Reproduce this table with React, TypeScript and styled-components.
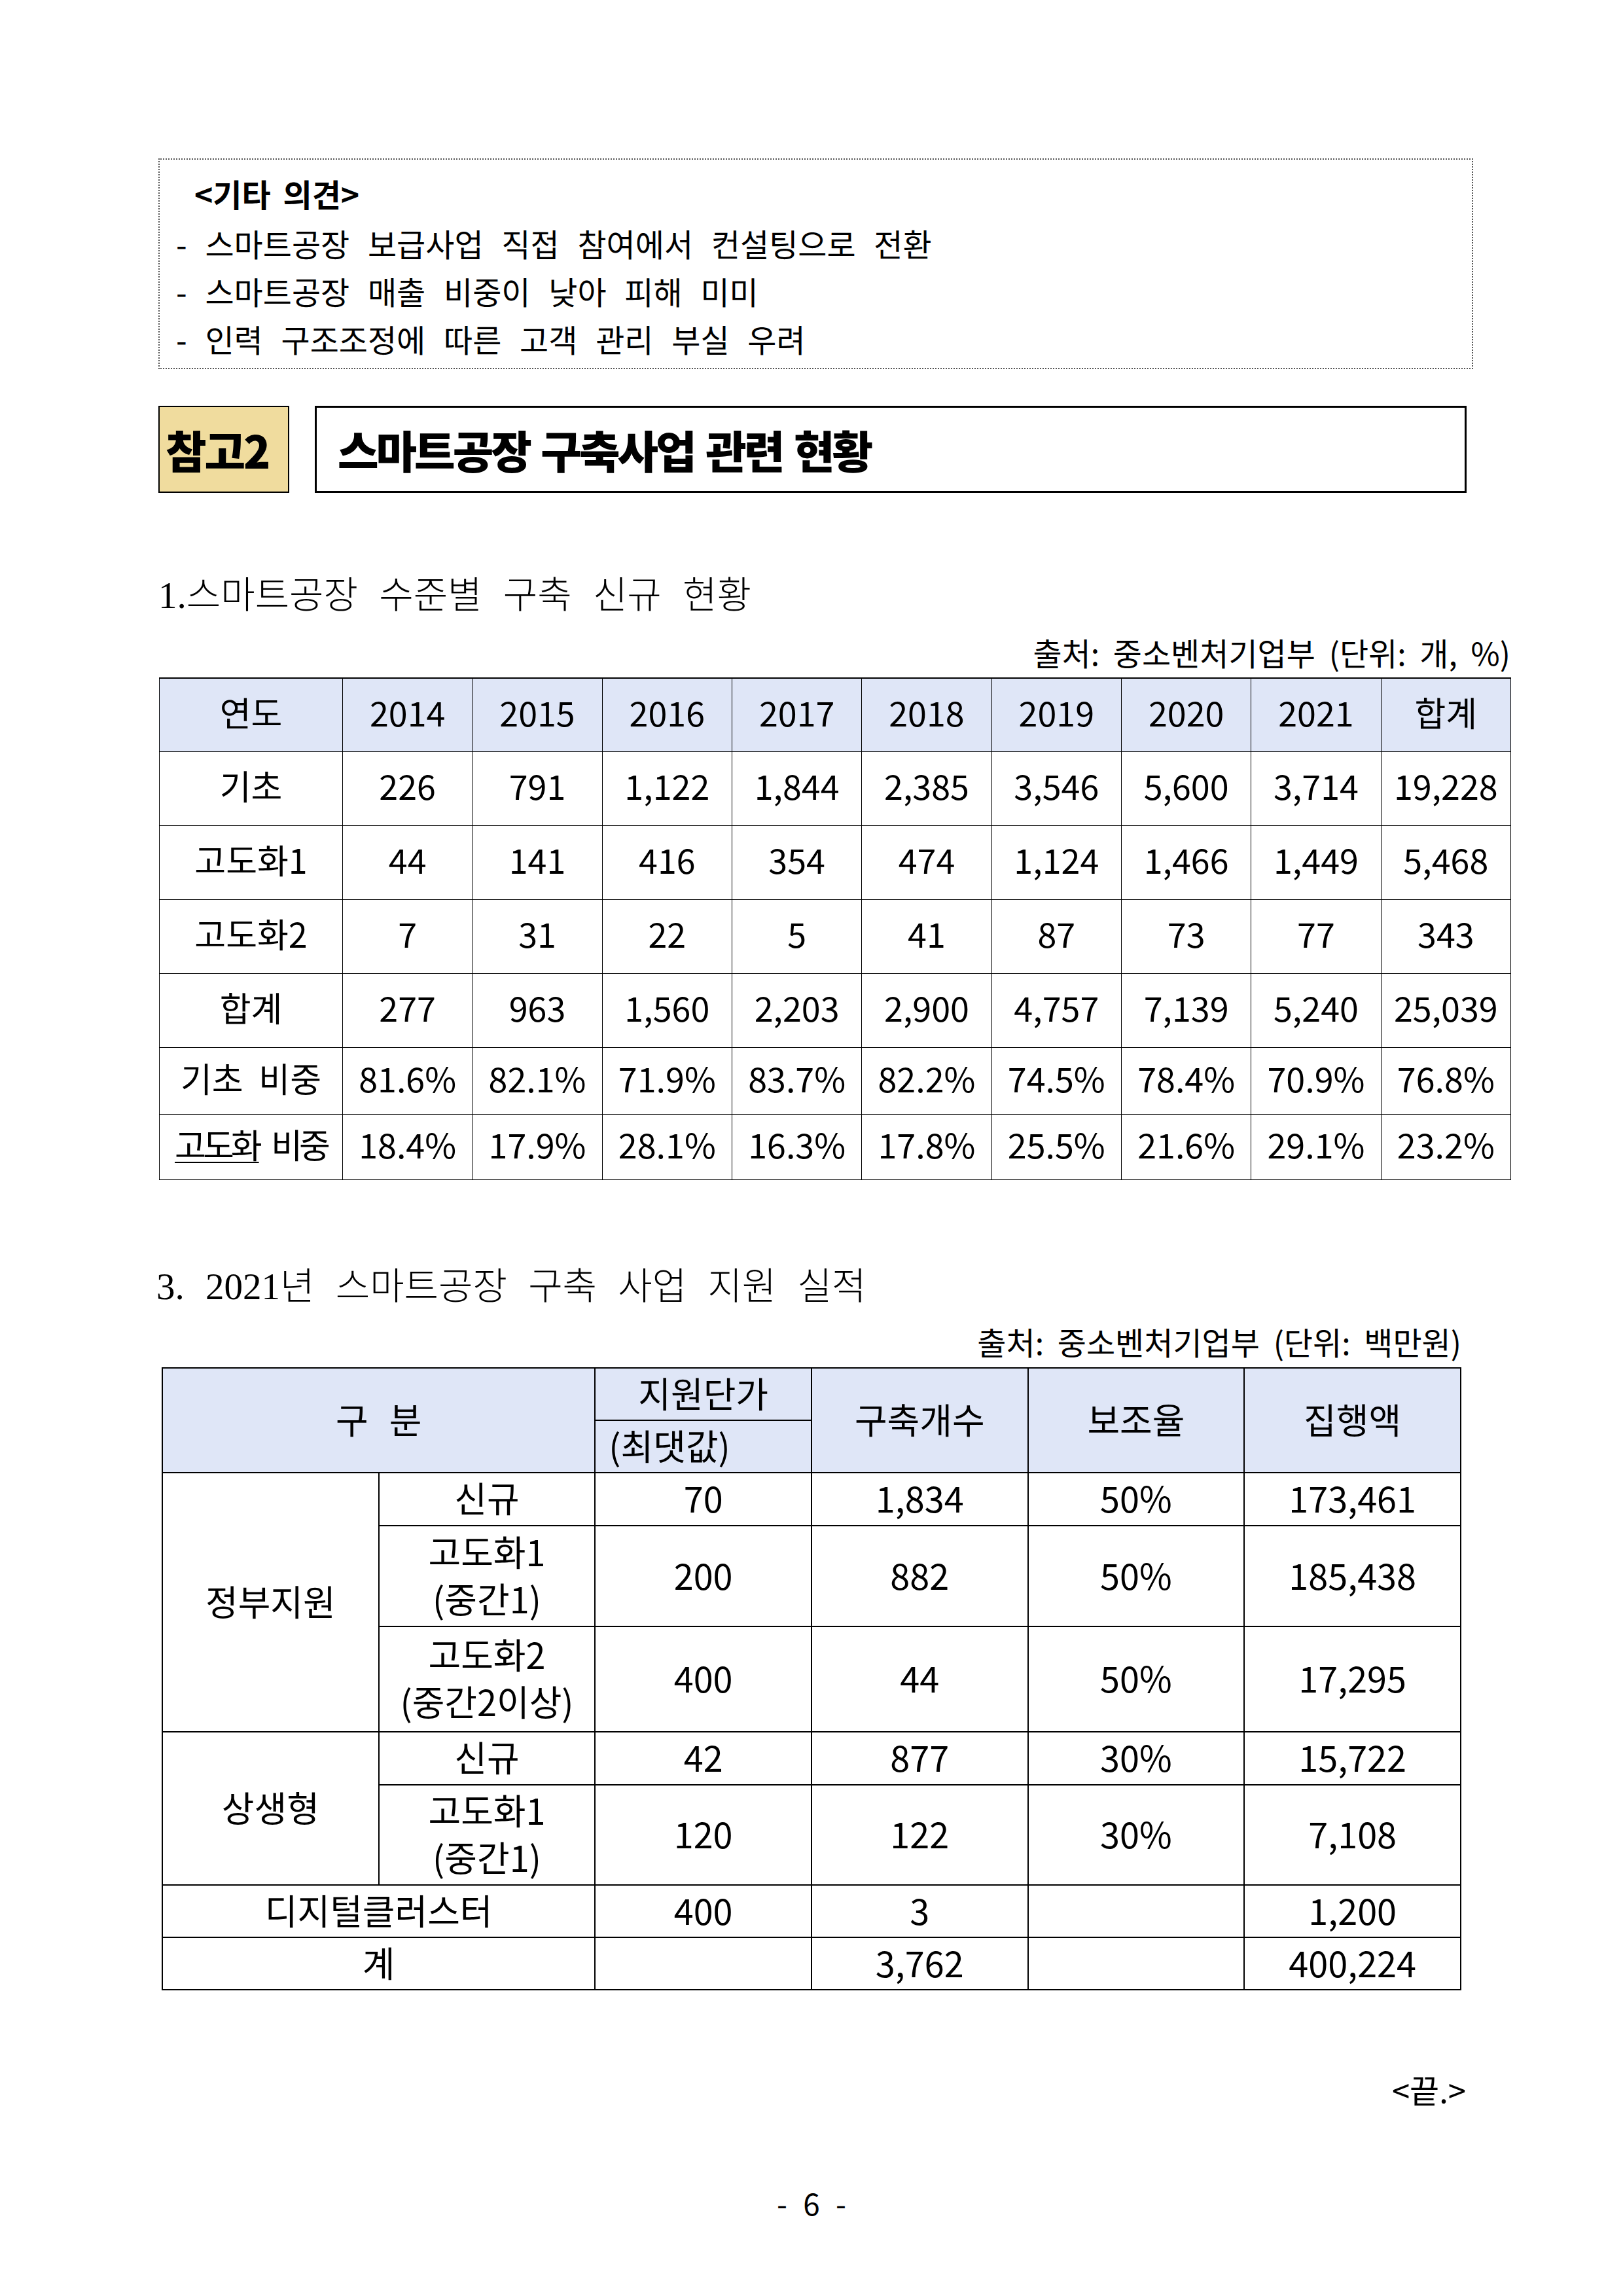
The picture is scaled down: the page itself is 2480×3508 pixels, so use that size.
import React from "react";
import styled, { createGlobalStyle } from "styled-components";

const Global = createGlobalStyle`
  html, body { margin: 0; padding: 0; background: #fff; }
  body { font-family: "Noto Sans CJK KR", "Noto Sans", sans-serif; color: #000; }
`;

const Page = styled.div`
  width: 2480px;
  height: 3508px;
  box-sizing: border-box;
  padding: 242px 0 0 242px;
  background: #fff;
`;

const NoteBox = styled.div`
  width: 2009px;
  height: 322px;
  box-sizing: border-box;
  border: 2px dotted #555;
  padding: 11px 0 0 25px;
  font-size: 48px;
  line-height: 73px;
  word-spacing: 17px;
`;

const NoteTitle = styled.div`
  font-weight: 700;
  padding-left: 28px;
  line-height: 80px;
  word-spacing: 8px;
`;

const NoteLine = styled.div`
  white-space: pre;
`;

const HeaderRow = styled.div`
  display: flex;
  gap: 39px;
  height: 133px;
  margin-top: 56px;
`;

const RefBadge = styled.div`
  width: 200px;
  box-sizing: border-box;
  border: 2px solid #000;
  background: #f0dc9e;
  display: flex;
  align-items: center;
  padding-left: 9px;
  font-size: 68px;
  font-weight: 900;
  letter-spacing: -3px;
`;

const TitleBox = styled.div`
  width: 1760px;
  box-sizing: border-box;
  border: 3px solid #000;
  display: flex;
  align-items: center;
  padding-left: 32px;
  font-size: 68px;
  font-weight: 900;
  letter-spacing: -4px;
  word-spacing: 6px;
`;

const Heading = styled.div<{ $mt: number; $ml?: number }>`
  margin-top: ${(p) => p.$mt}px;
  margin-left: ${(p) => p.$ml ?? 0}px;
  font-family: "Liberation Serif", "Noto Sans CJK KR", serif;
  font-size: 57px;
  font-weight: 300;
  line-height: 80px;
  word-spacing: 18px;
  white-space: pre;
`;

const Source = styled.div<{ $w: number; $mt: number; $ml?: number }>`
  width: ${(p) => p.$w}px;
  margin-top: ${(p) => p.$mt}px;
  margin-left: ${(p) => p.$ml ?? 0}px;
  text-align: right;
  font-size: 48px;
  line-height: 60px;
  word-spacing: 10px;
  white-space: pre;
`;

const Table1 = styled.table`
  margin-top: 9px;
  margin-left: 1px;
  width: 2066px;
  border-collapse: collapse;
  table-layout: fixed;
  font-size: 52px;
  border-top: 2px solid #000;
`;

const T1Cell = styled.td<{ $head?: boolean; $tight?: boolean }>`
  border: 1px solid #000;
  padding: 0 0 10px 0;
  text-align: center;
  vertical-align: middle;
  background: ${(p) => (p.$head ? "#dfe6f7" : "#fff")};
  letter-spacing: ${(p) => (p.$tight ? "-5px" : "normal")};
  word-spacing: 12px;
  white-space: nowrap;
`;

const T1Row = styled.tr<{ $h: number }>`
  height: ${(p) => p.$h}px;
`;

const Under = styled.span`
  text-decoration: underline;
  text-decoration-thickness: 2px;
  text-underline-offset: 5px;
`;

const Table2 = styled.table`
  margin-top: 10px;
  margin-left: 5px;
  width: 1986px;
  border-collapse: collapse;
  table-layout: fixed;
  font-size: 54px;
  line-height: 72px;
`;

const T2Cell = styled.td<{ $head?: boolean; $left?: boolean }>`
  border: 2px solid #000;
  padding: ${(p) => (p.$left ? "0 0 4px 20px" : "0 0 4px 0")};
  text-align: ${(p) => (p.$left ? "left" : "center")};
  vertical-align: middle;
  background: ${(p) => (p.$head ? "#dfe6f7" : "#fff")};
  white-space: nowrap;
  word-spacing: 20px;
`;

const T2Row = styled.tr<{ $h: number }>`
  height: ${(p) => p.$h}px;
`;

const EndMark = styled.div`
  width: 1998px;
  margin-top: 121px;
  text-align: right;
  font-size: 49px;
  line-height: 60px;
`;

const PageNo = styled.div`
  width: 1996px;
  margin-top: 113px;
  text-align: center;
  font-size: 46px;
  line-height: 60px;
  word-spacing: 14px;
  white-space: pre;
`;

const years = ["2014", "2015", "2016", "2017", "2018", "2019", "2020", "2021"];

const t1Rows: { label: React.ReactNode; vals: string[]; h: number; tight?: boolean }[] = [
  { label: "기초", vals: ["226", "791", "1,122", "1,844", "2,385", "3,546", "5,600", "3,714", "19,228"], h: 113 },
  { label: "고도화1", vals: ["44", "141", "416", "354", "474", "1,124", "1,466", "1,449", "5,468"], h: 113 },
  { label: "고도화2", vals: ["7", "31", "22", "5", "41", "87", "73", "77", "343"], h: 113 },
  { label: "합계", vals: ["277", "963", "1,560", "2,203", "2,900", "4,757", "7,139", "5,240", "25,039"], h: 113 },
  { label: "기초 비중", vals: ["81.6%", "82.1%", "71.9%", "83.7%", "82.2%", "74.5%", "78.4%", "70.9%", "76.8%"], h: 102 },
  {
    label: (
      <>
        <Under>고도화</Under> 비중
      </>
    ),
    vals: ["18.4%", "17.9%", "28.1%", "16.3%", "17.8%", "25.5%", "21.6%", "29.1%", "23.2%"],
    h: 100,
    tight: true,
  },
];

export default function App() {
  return (
    <>
      <Global />
      <Page>
        <NoteBox>
          <NoteTitle>&lt;기타 의견&gt;</NoteTitle>
          <NoteLine>- 스마트공장 보급사업 직접 참여에서 컨설팅으로 전환</NoteLine>
          <NoteLine>- 스마트공장 매출 비중이 낮아 피해 미미</NoteLine>
          <NoteLine>- 인력 구조조정에 따른 고객 관리 부실 우려</NoteLine>
        </NoteBox>

        <HeaderRow>
          <RefBadge>참고2</RefBadge>
          <TitleBox>스마트공장 구축사업 관련 현황</TitleBox>
        </HeaderRow>

        <Heading $mt={117}>1.스마트공장 수준별 구축 신규 현황</Heading>
        <Source $w={2066} $mt={16}>출처: 중소벤처기업부 (단위: 개, %)</Source>

        <Table1>
          <colgroup>
            <col style={{ width: 280 }} />
            {Array.from({ length: 9 }).map((_, i) => (
              <col key={i} />
            ))}
          </colgroup>
          <tbody>
            <T1Row $h={112}>
              <T1Cell $head>연도</T1Cell>
              {years.map((y) => (
                <T1Cell $head key={y}>
                  {y}
                </T1Cell>
              ))}
              <T1Cell $head>합계</T1Cell>
            </T1Row>
            {t1Rows.map((r, i) => (
              <T1Row $h={r.h} key={i}>
                <T1Cell $tight={r.tight}>{r.label}</T1Cell>
                {r.vals.map((v, j) => (
                  <T1Cell key={j}>{v}</T1Cell>
                ))}
              </T1Row>
            ))}
          </tbody>
        </Table1>

        <Heading $mt={123} $ml={-3}>3. 2021년 스마트공장 구축 사업 지원 실적</Heading>
        <Source $w={1986} $ml={5} $mt={13}>출처: 중소벤처기업부 (단위: 백만원)</Source>

        <Table2>
          <colgroup>
            {Array.from({ length: 6 }).map((_, i) => (
              <col key={i} />
            ))}
          </colgroup>
          <tbody>
            <T2Row $h={80}>
              <T2Cell $head colSpan={2} rowSpan={2}>
                구 분
              </T2Cell>
              <T2Cell $head>지원단가</T2Cell>
              <T2Cell $head rowSpan={2}>구축개수</T2Cell>
              <T2Cell $head rowSpan={2}>보조율</T2Cell>
              <T2Cell $head rowSpan={2}>집행액</T2Cell>
            </T2Row>
            <T2Row $h={80}>
              <T2Cell $head $left>
                (최댓값)
              </T2Cell>
            </T2Row>
            <T2Row $h={81}>
              <T2Cell rowSpan={3}>정부지원</T2Cell>
              <T2Cell>신규</T2Cell>
              <T2Cell>70</T2Cell>
              <T2Cell>1,834</T2Cell>
              <T2Cell>50%</T2Cell>
              <T2Cell>173,461</T2Cell>
            </T2Row>
            <T2Row $h={154}>
              <T2Cell>
                고도화1
                <br />
                (중간1)
              </T2Cell>
              <T2Cell>200</T2Cell>
              <T2Cell>882</T2Cell>
              <T2Cell>50%</T2Cell>
              <T2Cell>185,438</T2Cell>
            </T2Row>
            <T2Row $h={161}>
              <T2Cell>
                고도화2
                <br />
                (중간2이상)
              </T2Cell>
              <T2Cell>400</T2Cell>
              <T2Cell>44</T2Cell>
              <T2Cell>50%</T2Cell>
              <T2Cell>17,295</T2Cell>
            </T2Row>
            <T2Row $h={81}>
              <T2Cell rowSpan={2}>상생형</T2Cell>
              <T2Cell>신규</T2Cell>
              <T2Cell>42</T2Cell>
              <T2Cell>877</T2Cell>
              <T2Cell>30%</T2Cell>
              <T2Cell>15,722</T2Cell>
            </T2Row>
            <T2Row $h={153}>
              <T2Cell>
                고도화1
                <br />
                (중간1)
              </T2Cell>
              <T2Cell>120</T2Cell>
              <T2Cell>122</T2Cell>
              <T2Cell>30%</T2Cell>
              <T2Cell>7,108</T2Cell>
            </T2Row>
            <T2Row $h={80}>
              <T2Cell colSpan={2}>디지털클러스터</T2Cell>
              <T2Cell>400</T2Cell>
              <T2Cell>3</T2Cell>
              <T2Cell />
              <T2Cell>1,200</T2Cell>
            </T2Row>
            <T2Row $h={80}>
              <T2Cell colSpan={2}>계</T2Cell>
              <T2Cell />
              <T2Cell>3,762</T2Cell>
              <T2Cell />
              <T2Cell>400,224</T2Cell>
            </T2Row>
          </tbody>
        </Table2>

        <EndMark>&lt;끝.&gt;</EndMark>
        <PageNo>- 6 -</PageNo>
      </Page>
    </>
  );
}
